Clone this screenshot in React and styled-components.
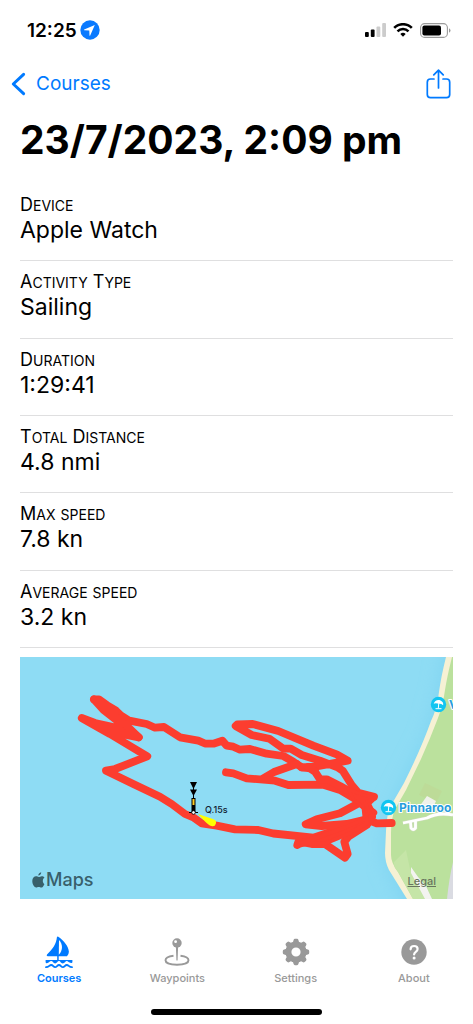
import React from 'react';
import styled, { createGlobalStyle } from 'styled-components';

const GlobalStyle = createGlobalStyle`
  * {
    box-sizing: border-box;
  }
  body {
    margin: 0;
    background: #fff;
    color: #000;
    font-family: Inter, "Liberation Sans", sans-serif;
  }
`;

const Page = styled.div`
  display: flex;
  flex-direction: column;
  min-height: 100vh;
`;

const StatusBar = styled.div`
  display: flex;
  align-items: center;
  justify-content: space-between;
  height: 60px;
  padding: 0 22px 0 27px;
`;

const StatusGroup = styled.div`
  display: flex;
  align-items: center;
  gap: ${props => props.$gap}px;
`;

const Time = styled.span`
  font-size: 19px;
  font-weight: 600;
`;

const NavBar = styled.nav`
  display: flex;
  align-items: center;
  justify-content: space-between;
  height: 48px;
  padding: 0 22px 0 11px;
`;

const NavButton = styled.button`
  display: flex;
  align-items: center;
  gap: 10px;
  padding: 0;
  border: 0;
  background: none;
  color: #007aff;
  font-family: inherit;
  font-size: 19px;
  line-height: 26px;
  cursor: pointer;
`;

const Main = styled.main`
  display: flex;
  flex: 1;
  flex-direction: column;
  padding: 0 20px;
`;

const Title = styled.h1`
  margin: 8px 0 20px;
  font-size: 39px;
  font-weight: 700;
  line-height: 48px;
  white-space: nowrap;
`;

const DetailList = styled.dl`
  display: grid;
  flex: 1;
  grid-auto-rows: 1fr;
  margin: 0;
`;

const DetailRow = styled.div`
  padding: 10px 0 16px;
  border-bottom: 1px solid #dfdfe0;
`;

const DetailLabel = styled.dt`
  font-size: 18px;
  line-height: 22px;
`;

const SmallCap = styled.span`
  font-size: 14px;
  line-height: 1;
  text-transform: uppercase;
`;

const DetailValue = styled.dd`
  margin: 0;
  font-size: 23px;
  line-height: 28px;
`;

const MapBox = styled.section`
  position: relative;
  margin-top: 9px;
  overflow: hidden;

  > svg {
    display: block;
    width: 100%;
    height: auto;
  }
`;

const MapCredit = styled.div`
  position: absolute;
  left: 12px;
  bottom: 8px;
  display: flex;
  align-items: center;
  gap: 1px;
  color: #38606b;
  font-size: 18px;
  font-weight: 500;
  line-height: 22px;
`;

const LegalLink = styled.a`
  position: absolute;
  right: 17px;
  bottom: 10px;
  color: #69765f;
  font-size: 11px;
  font-weight: 500;
  line-height: 16px;
`;

const TabBar = styled.nav`
  display: grid;
  grid-template-columns: repeat(4, 1fr);
  padding-top: 36px;
`;

const Tab = styled.button`
  display: flex;
  flex-direction: column;
  align-items: center;
  gap: 2px;
  padding: 0;
  border: 0;
  background: none;
  color: ${props => (props.$active ? '#007aff' : '#999')};
  font-family: inherit;
  font-size: 11px;
  font-weight: ${props => (props.$active ? 600 : 500)};
  line-height: 14px;
  cursor: pointer;
`;

const HomeIndicator = styled.div`
  width: 36%;
  height: 6px;
  margin: 24px auto 9px;
  border-radius: 3px;
  background: #000;
`;

const details = [
  { label: 'Device', value: 'Apple Watch' },
  { label: 'Activity Type', value: 'Sailing' },
  { label: 'Duration', value: '1:29:41' },
  { label: 'Total Distance', value: '4.8 nmi' },
  { label: 'Max speed', value: '7.8 kn' },
  { label: 'Average speed', value: '3.2 kn' },
];

// Inter only has part of its small caps, so the lowercase runs are set by hand
function SmallCaps({ text }) {
  return text.split(/([a-z]+)/).map((part, i) => (
    i % 2 ? <SmallCap key={i}>{part}</SmallCap> : part
  ));
}

function LocationIcon() {
  return (
    <svg width="20" height="20" viewBox="0 0 20 20" aria-hidden="true">
      <circle cx="10" cy="10" r="9.7" fill="#0a7aff" />
      <path d="M14.8 4.9 4.2 9.6q-.6.5.2.7l4.9.2.2 4.9q.2.8.7.2Z" fill="#fff" />
    </svg>
  );
}

function SignalIcon() {
  return (
    <svg width="21" height="14" viewBox="0 0 21 14" aria-hidden="true">
      <rect x="0" y="9" width="3.8" height="5" rx="1" />
      <rect x="5.8" y="6.6" width="3.8" height="7.4" rx="1" />
      <rect x="11.5" y="3.5" width="3.8" height="10.5" rx="1" fill="#ccc" />
      <rect x="17.2" y="0" width="3.8" height="14" rx="1" fill="#ccc" />
    </svg>
  );
}

function WifiIcon() {
  return (
    <svg width="20" height="14" viewBox="0 0 20 14" fill="none" stroke="#000" aria-hidden="true">
      <path d="M1.2 4.9a12.4 12.4 0 0 1 17.6 0" strokeWidth="2.6" />
      <path d="M4.5 8.3a7.8 7.8 0 0 1 11 0" strokeWidth="2.5" />
      <path d="M10 13.8 7.3 11.1a3.8 3.8 0 0 1 5.4 0Z" fill="#000" stroke="none" />
    </svg>
  );
}

function BatteryIcon() {
  return (
    <svg width="31" height="15" viewBox="0 0 31 15" aria-hidden="true">
      <rect x=".6" y=".6" width="26.8" height="13.8" rx="4" fill="none" stroke="#9b9b9b" strokeWidth="1.1" />
      <rect x="2.4" y="2.6" width="18.6" height="9.8" rx="2" />
      <path d="M29 5.2q1.5.7 1.5 2.3t-1.5 2.3Z" fill="#9b9b9b" />
    </svg>
  );
}

function BackIcon() {
  return (
    <svg width="15" height="24" viewBox="0 0 15 24" fill="none" stroke="currentColor" strokeWidth="3" strokeLinecap="round" strokeLinejoin="round" aria-hidden="true">
      <path d="M12.6 2.3 2.3 12l10.3 9.7" />
    </svg>
  );
}

function ShareIcon() {
  return (
    <svg width="25" height="30" viewBox="0 0 25 30" fill="none" stroke="currentColor" strokeWidth="1.7" strokeLinecap="round" strokeLinejoin="round" aria-hidden="true">
      <path d="M8 10H4.5A3.2 3.2 0 0 0 1.3 13.2v12.3a3.2 3.2 0 0 0 3.2 3.2h16a3.2 3.2 0 0 0 3.2-3.2V13.2A3.2 3.2 0 0 0 20.5 10H17" />
      <path d="M12.5 19V1.2M7.8 5.9l4.7-4.7 4.7 4.7" />
    </svg>
  );
}

function BoatIcon() {
  return (
    <svg width="30" height="34" viewBox="0 0 30 34" fill="currentColor" aria-hidden="true">
      <path d="M12.9 2.2q.5-1.4 1.4-.4C20 5.8 24.4 11.2 24.9 16.7q0 2.3-1.9 4.5H14.7V25h-1.5v-3.8H3.7q-1.7-.3-.7-1.8C8.5 14.5 12.4 8.5 12.9 2.2Z" />
      <path d="M15 5c3.8 4 4.2 10-.2 14.8Z" fill="#fff" />
      <path d="M1.6 24.9h26.800v2q0 1.400-1.300 1.100c-2.400 0-3-1.900-4.300-1.900s-2.200 2.300-4.100 2.300-2.300-2.300-3.700-2.300-2.200 2.300-3.900 2.300-2.300-2.300-3.900-2.300-2.200 2.200-4.400 2.200q-1.200 0-1.200-1.300Z" />
      <path d="M2 32.200c3.100 0 3.300-2.200 5.200-2.200s2.200 2.200 3.900 2.200 2.200-2.200 3.900-2.200 2.200 2.200 3.900 2.200 2-2.200 3.900-2.200 2.100 2.200 5.200 2.200" fill="none" stroke="currentColor" strokeWidth="1.8" strokeLinecap="round" />
    </svg>
  );
}

function WaypointIcon() {
  return (
    <svg width="30" height="34" viewBox="0 0 30 34" fill="currentColor" aria-hidden="true">
      <circle cx="15" cy="8" r="4.7" />
      <circle cx="13.6" cy="6.7" r="1.4" fill="#fff" />
      <path d="M13.9 12h2.2l-.5 13.1q-.6 1.2-1.2 0Z" />
      <path d="M11.5 20.8C6.5 21.4 3.5 23.1 3.5 25.3c0 2.8 5 4.5 11.5 4.5s11.5-1.7 11.5-4.5c0-2.2-3-3.9-8-4.5" fill="none" stroke="currentColor" strokeWidth="1.9" />
    </svg>
  );
}

function SettingsIcon() {
  return (
    <svg width="30" height="34" viewBox="0 0 30 34" fill="currentColor" aria-hidden="true">
      <circle cx="15" cy="17" r="7.6" fill="none" stroke="currentColor" strokeWidth="6" />
      {[0, 45, 90, 135, 180, 225, 270, 315].map(angle => (
        <path
          key={angle}
          d="M11.6 8.4 12.5 5.2q.3-1.4 1.5-1.4h2q1.2 0 1.5 1.4l.9 3.2Z"
          transform={`rotate(${angle} 15 17)`}
        />
      ))}
    </svg>
  );
}

function AboutIcon() {
  return (
    <svg width="30" height="34" viewBox="0 0 30 34" aria-hidden="true">
      <circle cx="15" cy="17" r="12.7" fill="currentColor" />
      <path d="M11.6 14.3c0-2.2 1.5-3.3 3.5-3.3s3.5 1.2 3.5 3.1c0 2.9-3.5 2.8-3.5 5.4" fill="none" stroke="#fff" strokeWidth="2.2" strokeLinecap="round" />
      <circle cx="15.1" cy="23" r="1.5" fill="#fff" />
    </svg>
  );
}

function AppleIcon() {
  return (
    <svg width="13" height="16" viewBox="0 0 13 16" fill="currentColor" aria-hidden="true">
      <path d="M9.2.2c.1 1.7-1.2 3.3-2.9 3.4C6.1 2 7.5.4 9.2.2ZM12.4 12.2c-.9 2-2 3.4-3.2 3.4-1 0-1.3-.6-2.5-.6s-1.6.6-2.5.6C2.3 15.6.3 12.4.3 9.1c0-3 1.8-4.8 3.8-4.8 1.1 0 1.9.7 2.7.7.7 0 1.7-.8 3-.8 1.1 0 2 .5 2.7 1.4-2.4 1.6-2 5.5-.1 6.6Z" />
    </svg>
  );
}

function BeachPin({ x, y }) {
  return (
    <g transform={`translate(${x} ${y})`}>
      <circle r="7.7" fill="#12c5f1" />
      <path d="M-4.8-.8C-4-4-.8-5.3 2-4.1 4.4-3 5.1-1.2 4.6.8L2.8-.5 1-.7-.8-1.1-3-1.2Z" fill="#fff" />
      <path d="M.3-1.5-.2 3.8M-3 4.2h6" stroke="#fff" strokeWidth="1" fill="none" />
    </g>
  );
}

// sailed track, one polyline per leg
const track = [
  '74,42.3 79,42.3 86.7,48 96,53.7 100.7,58.3 109.3,63.7 126.7,67 135,70.7 144,70 160,80.3 178.3,83.7 185,86.5 193.3,86.7 202.3,83.7 206.7,88.7 213.3,89.7 220,92.7 230,92 246.7,96.7 263.3,99 273.3,104.7 281.7,110.3 295,112',
  '74,42.3 83.5,53 95,62 118.7,80.3 105,77.7 93.3,70 75,66 61.7,61 90,77 127.3,99.3 95,112 86,113.7 113.3,127 140,139.7 151.7,147 165,157 173.3,160.3 181.7,166.3 196.7,168.7 215,172.3 238.3,173 253.3,176.5 293.3,180.7 326.7,169.7',
  '78,44 94,58 108,70 118.7,80.3',
  '281.7,110.3 295,109.7 327.7,103.7 316.7,97.3 293.3,88.7 258.3,74 232.7,67 217.3,67.3 215.7,69 231.7,78 249.3,81.7 263.3,91.7 270.7,91.7 281.7,98 300,103.7 318.3,110.7 322.7,113.7 331.7,128 338.3,135.7 354,139.7',
  '276.7,107 254,115 243.3,121.3',
  '206,115.3 213.3,116.3 226.7,121.3 255,123.7 268.3,128 303.3,127.7 320,133 336.7,143 346.7,151.3 353.3,155.7',
  '288,110 295,114.7 300,122.3 306.7,122.3 320,129 333.3,136.3 353,140.5 346.7,146.3 351,155 344,166 326.7,174.7 303.3,184',
  '341,145 320,156.3 296.7,162.3 285.7,167.3 301.7,169 326.7,167 346.7,162.3 356.7,166.3 371.7,166',
  '277.3,188 278.5,184.5 291.7,187 305,187 325,200.7 327.7,197 324.3,184.7 328.3,179.7 346.7,168 352,160',
  '278.5,187 305,180 328,172 346,165',
];

function CourseMap() {
  return (
    <svg viewBox="0 0 433 242" role="img" aria-label="Course track">
      <defs>
        <filter id="shallows" x="-20%" y="-20%" width="140%" height="140%">
          <feGaussianBlur stdDeviation="9" />
        </filter>
      </defs>
      <rect width="433" height="242" fill="#8edcf4" />
      <path d="M426-10 418 34 406 80 378 136 366 160 364 202 390 260 450 260V-10Z" fill="#80d4f2" filter="url(#shallows)" />
      <path d="M426 0Q421 20 419 35 417 52 411 64 401 92 384 126L373 145Q367 152 366 174L365 196Q365 205 369 213L387 242H433V0Z" fill="#f6f1d4" />
      <path d="M432 0Q427 20 425 33 423 48 418 61 410 82 401 102L386 133Q378 147 375 152 371 162 371 176V198Q371 206 378 215L393 242H433V0Z" fill="#bbe19d" />
      <path d="M386 193 374 205Q373 209 378 215L393 242H412L390 212Z" fill="#c5e5a7" />
      <path d="M405 126 422 134 416 146 399 138Z" fill="#bddb98" />
      <path d="M407 139 416 144 413 151 399 150Z" fill="#f0f1ea" />
      <path d="M433 205Q429 222 427 242H433Z" fill="#dadbe2" />
      <path d="M391 210Q398 221 406 229L412 242H405L391 216Z" fill="#f3f3f0" />
      <g fill="none" strokeLinejoin="round">
        <path d="M383 166 407 161Q418 155 433 158M390.5 165 391 171Q393 174 395.5 171V163" stroke="#cfdcbe" strokeWidth="3.8" />
        <path d="M383 166 407 161Q418 155 433 158M390.5 165 391 171Q393 174 395.5 171V163" stroke="#fff" strokeWidth="2.8" />
      </g>
      <g stroke="#fc3d2f" strokeWidth="7.8" strokeLinecap="round" strokeLinejoin="round">
        {track.map(points => (
          <polyline key={points} points={points} fill="none" />
        ))}
        <path d="M282 186 326 170 347 161 346 167 326 178 304 187Z" fill="#fc3d2f" strokeWidth="4" />
        <path d="M328 132 340 137 354 141 345 146 350 155 344 160 343 150 334 143Z" fill="#fc3d2f" strokeWidth="3" />
      </g>
      <path d="M178 157 193.5 162.3A3.3 3.3 0 0 1 191.5 169Q189 169.5 178 157Z" fill="#ff0" />
      <path d="M170 125h7l-3.5 7ZM170 132.5h7l-3.5 6.5ZM173 131h1v10h-1ZM171.5 141h4v14h-4Z" />
      <path d="M172.5 142h2v6h-2Z" fill="#fdca24" />
      <path d="M169 155.5h9" stroke="#000" strokeWidth="1" />
      <circle cx="173.5" cy="155.5" r="1.8" fill="#fff" stroke="#000" strokeWidth=".8" />
      <text x="185" y="156" fontSize="9" fontWeight="500" fill="#123">Q.15s</text>
      <BeachPin x={418.5} y={47.5} />
      <BeachPin x={368.5} y={150.5} />
      <g fontSize="12" fontWeight="700" fill="#289ddd" stroke="#fff" strokeWidth="2" strokeLinejoin="round" paintOrder="stroke">
        <text x="429" y="52">V</text>
        <text x="379" y="155">Pinnaroo</text>
      </g>
    </svg>
  );
}

const tabs = [
  { name: 'Courses', Icon: BoatIcon },
  { name: 'Waypoints', Icon: WaypointIcon },
  { name: 'Settings', Icon: SettingsIcon },
  { name: 'About', Icon: AboutIcon },
];

function App() {
  return (
    <Page>
      <GlobalStyle />
      <StatusBar>
        <StatusGroup $gap={3}>
          <Time>12:25</Time>
          <LocationIcon />
        </StatusGroup>
        <StatusGroup $gap={7}>
          <SignalIcon />
          <WifiIcon />
          <BatteryIcon />
        </StatusGroup>
      </StatusBar>
      <NavBar>
        <NavButton type="button">
          <BackIcon />
          Courses
        </NavButton>
        <NavButton type="button" aria-label="Share">
          <ShareIcon />
        </NavButton>
      </NavBar>
      <Main>
        <Title>23/7/2023, 2:09 pm</Title>
        <DetailList>
          {details.map(item => (
            <DetailRow key={item.label}>
              <DetailLabel><SmallCaps text={item.label} /></DetailLabel>
              <DetailValue>{item.value}</DetailValue>
            </DetailRow>
          ))}
        </DetailList>
        <MapBox>
          <CourseMap />
          <MapCredit>
            <AppleIcon />
            Maps
          </MapCredit>
          <LegalLink href="#legal">Legal</LegalLink>
        </MapBox>
      </Main>
      <TabBar>
        {tabs.map(({ name, Icon }) => (
          <Tab key={name} type="button" $active={name === 'Courses'}>
            <Icon />
            {name}
          </Tab>
        ))}
      </TabBar>
      <HomeIndicator />
    </Page>
  );
}

export default App;
